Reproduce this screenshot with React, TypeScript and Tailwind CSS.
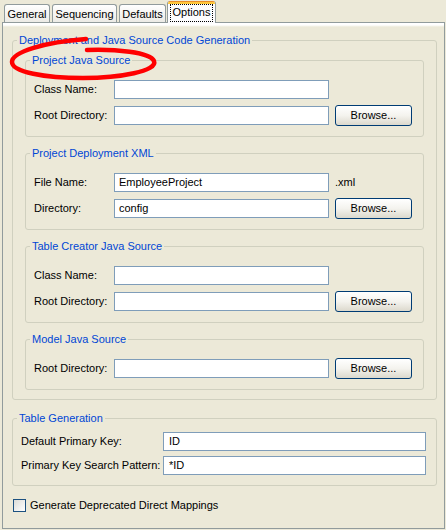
import React from "react";

type RowProps = {
  label: string;
  value?: string;
  browse?: boolean;
  suffix?: string;
};

function InputRow({ label, value, browse, suffix }: RowProps) {
  return (
    <div className="flex h-[21px] items-center">
      <span className="w-[80px] shrink-0 text-black">{label}</span>
      <div className="flex h-[19px] w-[215px] shrink-0 items-center border border-[#7F9DB9] bg-white pl-[4px] text-black">
        {value}
      </div>
      {browse && (
        <button
          type="button"
          className="ml-[6px] h-[21px] w-[77px] shrink-0 rounded-[3px] border border-[#003C74] bg-gradient-to-b from-white via-[#F4F3EE] to-[#DCD9CD] text-[11px] leading-[13px] text-black"
        >
          Browse...
        </button>
      )}
      {suffix && <span className="ml-[6px] text-black">{suffix}</span>}
    </div>
  );
}

function Group({
  title,
  className,
  contentClass,
  children,
}: {
  title: string;
  className?: string;
  contentClass?: string;
  children: React.ReactNode;
}) {
  return (
    <fieldset className={"rounded-[3px] border border-[#D0D0BF] " + (className ?? "")}>
      <legend className="ml-[4px] px-[2px] leading-[13px] text-[#0046D5]">{title}</legend>
      <div className={contentClass}>{children}</div>
    </fieldset>
  );
}

function Tab({ label, width, gap }: { label: string; width: string; gap: string }) {
  return (
    <div
      className={
        "flex h-[18px] items-center justify-center rounded-t-[3px] border border-b-0 border-[#919B9C] bg-gradient-to-b from-white to-[#ECEBE6] pt-[1px] text-black " +
        width +
        " " +
        gap
      }
    >
      {label}
    </div>
  );
}

export default function App() {
  return (
    <div className="relative h-[530px] w-[446px] overflow-hidden bg-[#ECE9D8] font-['Liberation_Sans',Arial,sans-serif] text-[11px] leading-[13px] text-black">
      {/* tab strip */}
      <div className="flex h-[22px] items-end pl-[4px]">
        <Tab label="General" width="w-[46px]" gap="" />
        <Tab label="Sequencing" width="w-[65px]" gap="ml-[2px]" />
        <Tab label="Defaults" width="w-[47px]" gap="ml-[2px]" />
        <div className="relative z-10 -mb-[1px] ml-[1px] flex h-[22px] w-[49px] flex-col overflow-hidden rounded-t-[3px] border-x border-[#919B9C] bg-[#FCFCFE]">
          <div className="h-[1px] bg-[#E68B2C]" />
          <div className="h-[2px] bg-[#FFC73C]" />
          <div className="flex flex-1 items-start justify-center pt-[1px]">
            <span className="px-[2px] pb-[2px] pt-[1px] outline-1 outline-dotted outline-black">Options</span>
          </div>
        </div>
      </div>

      {/* tab page */}
      <div className="ml-[2px] h-[507px] w-[443px] border border-[#919B9C] bg-[linear-gradient(#ffffff,#ffffff_2px,#ECE9D8_4px)]">
        <Group
          title="Deployment and Java Source Code Generation"
          className="ml-[9px] mt-[11px] w-[425px]"
          contentClass="px-[12px] pb-[9px] pt-[7px]"
        >
          <Group
            title="Project Java Source"
            className="w-[399px]"
            contentClass="flex flex-col gap-[5px] pb-[10px] pl-[8px] pt-[12px]"
          >
            <InputRow label="Class Name:" />
            <InputRow label="Root Directory:" browse />
          </Group>

          <Group
            title="Project Deployment XML"
            className="mt-[10px] w-[399px]"
            contentClass="flex flex-col gap-[5px] pb-[10px] pl-[8px] pt-[12px]"
          >
            <InputRow label="File Name:" value="EmployeeProject" suffix=".xml" />
            <InputRow label="Directory:" value="config" browse />
          </Group>

          <Group
            title="Table Creator Java Source"
            className="mt-[10px] w-[399px]"
            contentClass="flex flex-col gap-[5px] pb-[10px] pl-[8px] pt-[12px]"
          >
            <InputRow label="Class Name:" />
            <InputRow label="Root Directory:" browse />
          </Group>

          <Group
            title="Model Java Source"
            className="mt-[10px] w-[399px]"
            contentClass="flex flex-col gap-[5px] pb-[10px] pl-[8px] pt-[12px]"
          >
            <InputRow label="Root Directory:" browse />
          </Group>
        </Group>

        <Group
          title="Table Generation"
          className="ml-[9px] mt-[12px] w-[425px]"
          contentClass="flex flex-col gap-[5px] pb-[10px] pl-[8px] pt-[7px]"
        >
          <div className="flex h-[19px] items-center">
            <span className="w-[142px] shrink-0">Default Primary Key:</span>
            <div className="flex h-[19px] w-[263px] items-center border border-[#7F9DB9] bg-white pl-[5px]">ID</div>
          </div>
          <div className="flex h-[19px] items-center">
            <span className="w-[142px] shrink-0">Primary Key Search Pattern:</span>
            <div className="flex h-[19px] w-[263px] items-center border border-[#7F9DB9] bg-white pl-[5px]">*ID</div>
          </div>
        </Group>

        <label className="ml-[10px] mt-[13px] flex h-[13px] items-center">
          <span className="h-[13px] w-[13px] shrink-0 border border-[#1C5180] bg-gradient-to-br from-[#DCDCD7] to-white" />
          <span className="ml-[4px]">Generate Deprecated Direct Mappings</span>
        </label>
      </div>

      {/* hand-drawn red circle around the first group title */}
      <svg
        className="pointer-events-none absolute left-0 top-0"
        width="446"
        height="530"
        viewBox="0 0 446 530"
      >
        <path
          d="M87 50 C115 49 150 52 154 61 C158 71 120 78 83 78 C45 78 12 72 12 62 C12 52 45 42 86 39"
          fill="none"
          stroke="#FF0000"
          strokeWidth="4.5"
          strokeLinecap="round"
        />
      </svg>
    </div>
  );
}
